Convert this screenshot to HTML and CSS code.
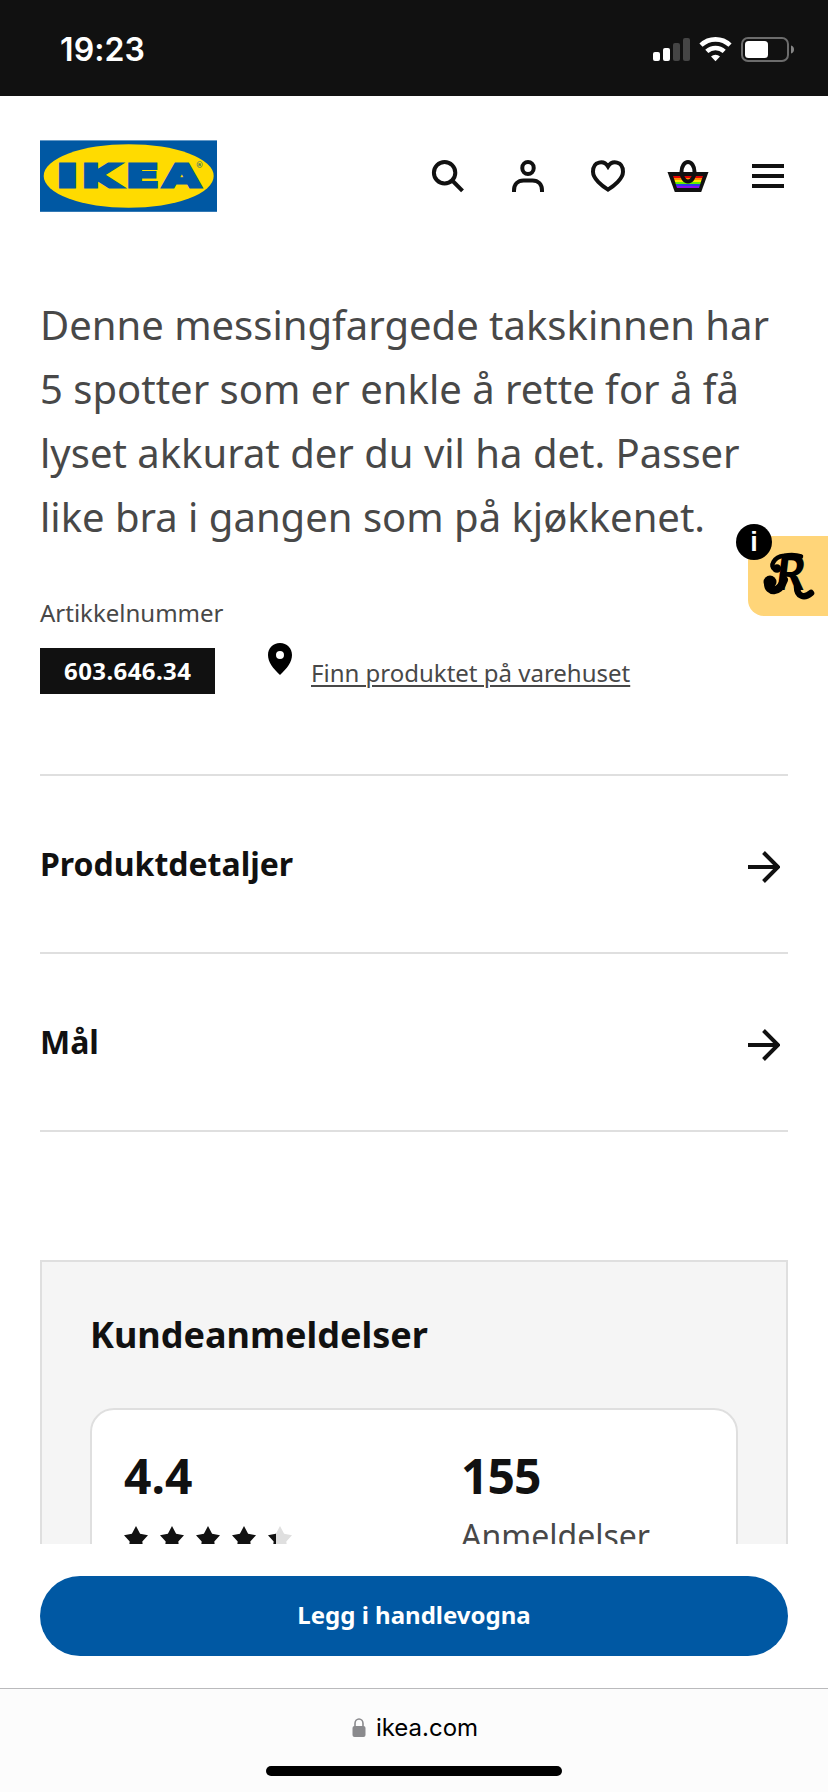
FILE: index.html
```html
<!DOCTYPE html>
<html lang="no">
<head>
<meta charset="utf-8">
<meta name="viewport" content="width=device-width">
<title>IKEA</title>
<link rel="stylesheet" href="styles.css">
</head>
<body>
<div class="phone">
  <div class="status">
    <span class="time">19:23</span>
    <svg class="indicators" width="144" height="28" viewBox="0 0 144 28" aria-hidden="true">
      <g fill="#fff">
        <rect x="1" y="16" width="7" height="9" rx="2"/>
        <rect x="11" y="12" width="7" height="13" rx="2"/>
      </g>
      <g fill="#454545">
        <rect x="21" y="7" width="7" height="18" rx="2"/>
        <rect x="31" y="2" width="7" height="23" rx="2"/>
      </g>
      <g fill="none" stroke="#fff" stroke-width="4.6">
        <path d="M49 9.2a21 21 0 0 1 29 0"/>
        <path d="M54.8 15.4a13 13 0 0 1 17.4 0"/>
      </g>
      <path d="M63.500 25.200l-4.500-4.700a6.800 6.800 0 0 1 9 0z" fill="#fff"/>
      <rect x="90" y="2" width="46" height="23" rx="6" fill="none" stroke="#6c6c6c" stroke-width="2"/>
      <rect x="93" y="5" width="23" height="17" rx="3.500" fill="#fff"/>
      <path d="M139 9.500c2 .5 3 2 3 4s-1 3.500-3 4z" fill="#858585"/>
    </svg>
  </div>

  <main class="page">
    <header class="header">
      <svg class="logo" width="177" height="72" viewBox="0 0 177 72" role="img" aria-label="IKEA">
        <rect y=".4" width="177" height="71.400" fill="#0058a3"/>
        <ellipse cx="88.700" cy="36" rx="85" ry="31.800" fill="#ffdb00"/>
        <g class="wordmark">
          <text transform="translate(16.300 46.800) scale(1.900 1)">I</text>
          <text transform="translate(41.700 46.800) scale(1.560 1)">K</text>
          <text transform="translate(85.900 46.800) scale(1.530 1)">E</text>
          <text transform="translate(123 46.800) scale(1.530 1)">A</text>
        </g>
        <text class="reg" x="155.500" y="27.500">®</text>
      </svg>
      <nav class="tools">
        <svg class="icon" viewBox="0 0 48 48"><circle cx="20.600" cy="20.700" r="10.700"/><path d="M28.200 28.500l10.300 10.300"/></svg>
        <svg class="icon" viewBox="0 0 48 48"><rect x="18.300" y="10" width="11.400" height="12" rx="5.700"/><path d="M10 40v-1.500c0-6 3.800-10 9.500-10h9c5.700 0 9.500 4 9.500 10V40"/></svg>
        <svg class="icon" viewBox="0 0 48 48"><path d="M24 14.500C20 8 9 8.800 9 19.800 9 27 18.500 34.300 24 37.600 29.500 34.300 39 27 39 19.800 39 8.800 28 8 24 14.500z"/></svg>
        <svg class="icon" viewBox="0 0 48 48">
          <path d="M3.500 20h41l-7.300 20H10.800z" class="solid"/>
          <g class="flag">
            <path d="M9 24h30l-.8 2.200H9.800z" fill="#e40303"/>
            <path d="M9.800 26.100h28.400l-.7 2H10.500z" fill="#ff8c00"/>
            <path d="M10.500 28h27l-.6 2H11.100z" fill="#ffe600"/>
            <path d="M11.100 30h25.800l-.6 2H11.700z" fill="#62f000"/>
            <path d="M11.700 32h24.600l-.6 2H12.300z" fill="#2c3ee8"/>
            <path d="M12.300 34h23.400l-.7 2H13z" fill="#8a0cf0"/>
          </g>
          <ellipse cx="24" cy="19.800" rx="6.500" ry="9.800"/>
        </svg>
        <svg class="icon" viewBox="0 0 48 48"><path d="M8 14h32M8 24h32M8 34h32"/></svg>
      </nav>
    </header>

    <p class="summary">Denne messingfargede takskinnen har 5 spotter som er enkle å rette for å få lyset akkurat der du vil ha det. Passer like bra i gangen som på kjøkkenet.</p>

    <section class="article">
      <div class="article-label">Artikkelnummer</div>
      <div class="article-row">
        <span class="article-number">603.646.34</span>
        <svg class="pin" width="24" height="32" viewBox="0 0 24 32"><path fill-rule="evenodd" d="M12 0C5 0 0 5 0 12c0 7 5 13.500 12 20 7-6.500 12-13 12-20C24 5 19 0 12 0zm0 8a4 4 0 1 1 0 8 4 4 0 0 1 0-8z"/></svg>
        <a class="store-link">Finn produktet på varehuset</a>
      </div>
    </section>

    <section class="accordion">
      <div class="row"><h2>Produktdetaljer</h2><svg class="arrow" viewBox="0 0 32 32"><path d="M0 16h29M15.500 1.500L30 16 15.500 30.500"/></svg></div>
      <div class="row"><h2>Mål</h2><svg class="arrow" viewBox="0 0 32 32"><path d="M0 16h29M15.500 1.500L30 16 15.500 30.500"/></svg></div>
    </section>

    <section class="reviews">
      <h2>Kundeanmeldelser</h2>
      <div class="card">
        <div class="stat">
          <strong>4.4</strong>
          <svg width="170" height="24" viewBox="0 0 170 24">
            <defs>
              <path id="star" d="M12 0l4.100 7.800L24 9.200l-5.700 6.300L19.400 24 12 20.400 4.600 24l1.100-8.500L0 9.200l7.900-1.400z"/>
              <clipPath id="part"><path d="M144 6h8v18h-8z"/></clipPath>
            </defs>
            <g fill="#111"><use href="#star"/><use href="#star" x="36"/><use href="#star" x="72"/><use href="#star" x="108"/></g>
            <use href="#star" x="144" fill="#dfdfdf"/>
            <g clip-path="url(#part)"><use href="#star" x="144" fill="#111"/></g>
          </svg>
        </div>
        <div class="stat">
          <strong class="count">155</strong>
          <span>Anmeldelser</span>
        </div>
      </div>
    </section>
  </main>

  <div class="buy"><button>Legg i handlevogna</button></div>

  <footer class="browser">
    <div class="address">
      <svg width="14" height="19" viewBox="0 0 14 19"><path d="M3 9V5.500a4 4.500 0 0 1 8 0V9" fill="none" stroke="#8a8a8d" stroke-width="1.600"/><rect x=".5" y="8" width="13" height="11" rx="2" fill="#8a8a8d"/></svg>
      <span>ikea.com</span>
    </div>
    <div class="home"></div>
  </footer>

  <aside class="widget">
    <svg width="56" height="52" viewBox="0 0 56 52">
      <text class="monogram" x="16" y="39">R</text>
      <g fill="none" stroke="#000" stroke-linecap="round">
        <path d="M15 19C9 15 14 6 24 4.800c6-1 12-1 17 .7" stroke-width="4.500"/>
        <path d="M8 33c0 8 11 10 16-4" stroke-width="8"/>
        <path d="M37 36c0 9 7 12 14 6" stroke-width="6.500"/>
      </g>
      <circle cx="17" cy="17.500" r="4.200"/>
      <circle cx="10" cy="31" r="6.500"/>
    </svg>
    <span class="info">i</span>
  </aside>
</div>
</body>
</html>
```
FILE: styles.css
```css
* { box-sizing: border-box; }
body { margin: 0; background: #fff; color: #111; font-family: "Noto Sans", sans-serif; }
h2, p { margin: 0; }
svg { display: block; flex: none; }

.phone { position: relative; display: flex; flex-direction: column; width: 828px; height: 1792px; overflow: hidden; }

.status { flex: none; height: 96px; padding: 0 32px 0 60px; display: flex; align-items: center; justify-content: space-between; background: #111; }
.time { padding-top: 4px; color: #fff; font: 600 32px/40px Inter, sans-serif; letter-spacing: .1px; }
.indicators { margin-top: 4px; }

.page { flex: none; height: 1448px; overflow: hidden; padding: 0 40px; }

.header { height: 197px; padding: 44px 0 0; display: flex; justify-content: space-between; align-items: flex-start; }
.wordmark { font: 700 31.500px "DejaVu Sans", sans-serif; fill: #0058a3; stroke: #0058a3; stroke-width: 3px; }
.reg { font: 700 8px "DejaVu Sans", sans-serif; fill: #3c7a6a; }
.tools { display: flex; gap: 32px; padding-top: 12px; margin-right: -4px; }
.icon { width: 48px; height: 48px; fill: none; stroke: #111; stroke-width: 4; }
.icon .solid { fill: #111; stroke: none; }
.icon .flag { stroke: none; }

.summary { width: 748px; color: #484848; font-size: 40px; line-height: 64px; }

.article { padding-top: 43px; color: #484848; font-size: 24px; line-height: 42px; }
.article-row { display: flex; align-items: flex-start; padding-top: 14px; height: 60px; }
.article-number { width: 175px; height: 46px; padding: 0 24px; background: #111; color: #fff; font-weight: 700; line-height: 46px; letter-spacing: .4px; }
.pin { margin: -5px 19px 0 53px; }
.store-link { margin-top: 4px; text-decoration: underline; text-decoration-thickness: 2px; text-underline-offset: 3px; }

.accordion { margin-top: 80px; border-top: 2px solid #dfdfdf; }
.row { height: 178px; padding-right: 8px; display: flex; align-items: center; justify-content: space-between; border-bottom: 2px solid #dfdfdf; }
.row h2 { font-size: 32px; line-height: 48px; }
.arrow { width: 32px; height: 32px; margin-top: 6px; fill: none; stroke: #111; stroke-width: 4; }

.reviews { height: 420px; margin-top: 128px; padding: 48px; border: 2px solid #dfdfdf; background: #f5f5f5; }
.reviews h2 { font-size: 36px; line-height: 50px; }
.card { height: 260px; margin-top: 48px; padding: 32px; display: grid; grid-template-columns: 1fr 1fr; column-gap: 94px; background: #fff; border: 2px solid #dfdfdf; border-radius: 24px; }
.stat { display: flex; flex-direction: column; align-items: flex-start; }
.stat strong { height: 70px; font-size: 48px; line-height: 68px; }
.stat .count { letter-spacing: -1px; }
.stat span { color: #484848; font-size: 32px; line-height: 48px; }
.stat svg { margin-top: 14px; }

.buy { flex: none; height: 144px; padding: 32px 40px; background: #fff; }
.buy button { display: block; width: 100%; height: 80px; padding: 0 0 2px; border: 0; border-radius: 40px; background: #0058a3; color: #fff; font: 700 24px/40px "Noto Sans", sans-serif; }

.browser { flex: none; height: 104px; display: flex; flex-direction: column; align-items: center; background: #fcfcfc; border-top: 1px solid #bababc; }
.address { display: flex; align-items: center; gap: 10px; height: 77px; padding-left: 2px; font: 400 24px/30px Inter, sans-serif; color: #000; }
.home { width: 296px; height: 10px; border-radius: 5px; background: #000; }

.widget { position: absolute; top: 536px; right: 0; width: 80px; height: 80px; padding: 15px 12px; border-radius: 16px 0 0 16px; background: #ffd579; }
.monogram { font: italic 900 48px Lato, sans-serif; }
.info { position: absolute; top: -12px; left: -12px; width: 36px; height: 36px; border-radius: 50%; background: #000; color: #fff; font: 700 27px/37px "Liberation Sans", sans-serif; text-align: center; }
```
